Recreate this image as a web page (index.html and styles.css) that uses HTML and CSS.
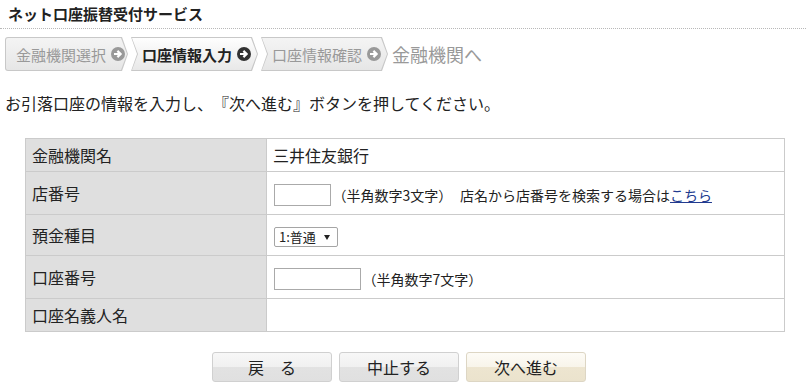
FILE: index.html
```html
<!doctype html>
<html lang="ja">
  <head>
    <meta charset="utf-8">
    <title>ネット口座振替受付サービス</title>
    <link rel="stylesheet" href="styles.css">
  </head>
  <body>
    <div class="page">
      <h1 class="title">ネット口座振替受付サービス</h1>

      <div class="steps">
        <div class="step step-first">
          <div class="step-inner">金融機関選択 <span class="go"><svg viewBox="0 0 14 14" width="14" height="14"><circle cx="7" cy="7" r="7" fill="currentColor"/><path d="M3 7h6.2M6.4 3.9 9.6 7 6.4 10.1" fill="none" stroke="#fff" stroke-width="2.2"/></svg></span></div>
        </div>
        <div class="step step-active">
          <div class="step-inner">口座情報入力 <span class="go"><svg viewBox="0 0 14 14" width="14" height="14"><circle cx="7" cy="7" r="7" fill="currentColor"/><path d="M3 7h6.2M6.4 3.9 9.6 7 6.4 10.1" fill="none" stroke="#fff" stroke-width="2.2"/></svg></span></div>
        </div>
        <div class="step">
          <div class="step-inner">口座情報確認 <span class="go"><svg viewBox="0 0 14 14" width="14" height="14"><circle cx="7" cy="7" r="7" fill="currentColor"/><path d="M3 7h6.2M6.4 3.9 9.6 7 6.4 10.1" fill="none" stroke="#fff" stroke-width="2.2"/></svg></span></div>
        </div>
        <div class="step-last">金融機関へ</div>
      </div>

      <p class="lead">お引落口座の情報を入力し、『次へ進む』ボタンを押してください。</p>

      <table class="form">
        <tr class="row-s">
          <th>金融機関名</th>
          <td>三井住友銀行</td>
        </tr>
        <tr class="row-l">
          <th>店番号</th>
          <td>
            <input type="text" class="field field-branch">
            <span class="note">（半角数字3文字）</span>
            <span class="note note-search">店名から店番号を検索する場合は<a href="#">こちら</a></span>
          </td>
        </tr>
        <tr class="row-m">
          <th>預金種目</th>
          <td>
            <span class="select"><select><option>1:普通</option></select></span>
          </td>
        </tr>
        <tr class="row-l">
          <th>口座番号</th>
          <td>
            <input type="text" class="field field-account">
            <span class="note">（半角数字7文字）</span>
          </td>
        </tr>
        <tr class="row-s">
          <th>口座名義人名</th>
          <td></td>
        </tr>
      </table>

      <div class="buttons">
        <button class="btn">戻　る</button>
        <button class="btn">中止する</button>
        <button class="btn btn-next">次へ進む</button>
      </div>
    </div>
  </body>
</html>
```

FILE: styles.css
```css
html, body {
  height: 100%;
}

body {
  margin: 0;
  font-family: "Noto Sans CJK JP", "Noto Sans", sans-serif;
  color: #222;
  background: #fff;
  text-spacing-trim: space-all;
}

.page {
  width: 806px;
  padding-top: 4px;
}

.title {
  margin: 0;
  font-size: 15px;
  line-height: 20px;
  font-weight: bold;
  color: #222;
  padding: 0 0 4px 8px;
  border-bottom: 1px dotted #b8b8b8;
}

/* step bar */
.steps {
  display: flex;
  align-items: center;
  gap: 3px;
  margin: 8px 0 0 5px;
  height: 34px;
}

.step {
  width: 127px;
  height: 34px;
  background: #c8c8c8;
  clip-path: polygon(0 0, 121px 0, 127px 17px, 121px 34px, 0 34px, 6px 17px);
  padding: 1px;
  box-sizing: border-box;
}

.step-first {
  width: 123px;
  clip-path: polygon(0 0, 117px 0, 123px 17px, 117px 34px, 0 34px);
  border-radius: 3px 0 0 3px;
}

.step-inner {
  height: 100%;
  display: flex;
  align-items: center;
  padding-left: 10px;
  font-size: 15px;
  color: #999;
  background: linear-gradient(#f4f4f4, #e6e6e6);
  clip-path: polygon(0 0, 119px 0, 125px 16px, 119px 32px, 0 32px, 6px 16px);
  gap: 3px;
}

.step-first .step-inner {
  clip-path: polygon(0 0, 115px 0, 121px 16px, 115px 32px, 0 32px);
  border-radius: 2px 0 0 2px;
}

.step-active .step-inner {
  color: #222;
  font-weight: bold;
  background: linear-gradient(#fefefe, #e8e8e8);
}

.go {
  display: inline-flex;
  margin-left: 2px;
}

.step .go {
  color: #999;
}

.step-active .go {
  color: #333;
}

.step-last {
  margin-left: 1px;
  font-size: 18px;
  color: #999;
}

.lead {
  margin: 21px 0 0 5px;
  font-size: 16px;
  line-height: 22px;
  color: #222;
}

/* form table */
.form {
  margin: 24px 0 0 25px;
  width: 760px;
  border-collapse: collapse;
  font-size: 16px;
}

.form th,
.form td {
  border: 1px solid #cbcbcb;
  padding: 0 0 0 6px;
  text-align: left;
  font-weight: normal;
}

.form th {
  width: 234px;
  background: #dfdfdf;
  color: #222;
}

.form td {
  padding-left: 6px;
  background: #fff;
}

.row-s th, .row-s td { height: 32px; }
.row-m th, .row-m td { height: 40px; }
.row-l th, .row-l td { height: 42px; }

.field {
  height: 22px;
  box-sizing: border-box;
  border: 1px solid #aaa;
  margin: 0 0 0 1px;
  vertical-align: middle;
  font-size: 13px;
}

.field-branch {
  width: 57px;
}

.field-account {
  width: 87px;
}

.note {
  font-size: 14px;
  vertical-align: middle;
  margin-left: -2px;
}

.note-search {
  margin-left: 4px;
}

.note a {
  color: #223b8f;
  text-decoration: underline;
}

.select {
  position: relative;
  display: inline-flex;
  vertical-align: middle;
  margin-left: 1px;
}

.select select {
  appearance: none;
  -webkit-appearance: none;
  width: 64px;
  height: 20px;
  border: 1px solid #a5a5a5;
  border-radius: 2px;
  background: #fff;
  font-family: inherit;
  font-size: 13px;
  padding: 0 0 0 4px;
  color: #222;
  line-height: 18px;
}

.select::after {
  content: "";
  position: absolute;
  right: 8px;
  top: 8px;
  border-left: 3px solid transparent;
  border-right: 3px solid transparent;
  border-top: 5px solid #222;
  pointer-events: none;
}

/* buttons */
.buttons {
  display: flex;
  justify-content: center;
  gap: 7px;
  margin: 20px 0 0 0;
  padding-right: 8px;
}

.btn {
  width: 120px;
  height: 30px;
  border: 1px solid #d0d0d0;
  border-radius: 3px;
  font-family: inherit;
  font-size: 16px;
  color: #222;
  background: linear-gradient(#f7f7f7 0, #f0f0f0 50%, #e2e2e2 50%, #e0e0e0 100%);
}

.btn-next {
  border-color: #ddd6c4;
  background: linear-gradient(#fdfbf6 0, #f8f4ea 50%, #ede5d0 50%, #ebe3cd 100%);
}
```
